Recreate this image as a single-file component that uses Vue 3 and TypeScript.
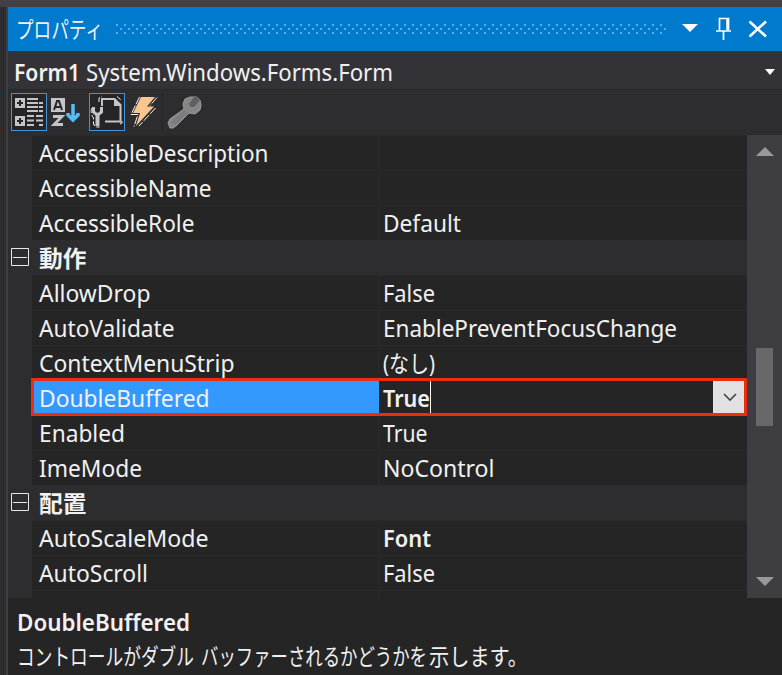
<script setup lang="ts">
import { h, type FunctionalComponent } from 'vue'

interface Row {
  kind: 'row' | 'category'
  name: string
  nameWidth: number
  value?: string
  valueWidth?: number
  bold?: boolean
  selected?: boolean
}

// Single line of text, fitted to the given advance width.
const Label: FunctionalComponent<{ text: string; w: number }> = (props) =>
  h('svg', { width: props.w, height: 34, overflow: 'visible' }, [
    h('text', { x: 0, y: 26, fill: 'currentColor', textLength: props.w, lengthAdjust: 'spacingAndGlyphs' }, props.text),
  ])
Label.props = ['text', 'w']

const rows: Row[] = [
  { kind: 'row', name: 'AccessibleDescription', nameWidth: 229.5 },
  { kind: 'row', name: 'AccessibleName', nameWidth: 172.5 },
  { kind: 'row', name: 'AccessibleRole', nameWidth: 155.5, value: 'Default', valueWidth: 78 },
  { kind: 'category', name: '動作', nameWidth: 47.5 },
  { kind: 'row', name: 'AllowDrop', nameWidth: 111.5, value: 'False', valueWidth: 52 },
  { kind: 'row', name: 'AutoValidate', nameWidth: 135.5, value: 'EnablePreventFocusChange', valueWidth: 294 },
  { kind: 'row', name: 'ContextMenuStrip', nameWidth: 195.5, value: '(なし)', valueWidth: 52 },
  { kind: 'row', name: 'DoubleBuffered', nameWidth: 170.5, value: 'True', valueWidth: 47, bold: true, selected: true },
  { kind: 'row', name: 'Enabled', nameWidth: 86, value: 'True', valueWidth: 44.5 },
  { kind: 'row', name: 'ImeMode', nameWidth: 103, value: 'NoControl', valueWidth: 111.5 },
  { kind: 'category', name: '配置', nameWidth: 47.5 },
  { kind: 'row', name: 'AutoScaleMode', nameWidth: 169.5, value: 'Font', valueWidth: 48, bold: true },
  { kind: 'row', name: 'AutoScroll', nameWidth: 109, value: 'False', valueWidth: 52 },
  { kind: 'row', name: '', nameWidth: 0 },
]
</script>

<template>
  <div class="window">
    <header class="title-bar">
      <Label class="title" text="プロパティ" :w="87" />
      <svg class="grip" width="551" height="12">
        <defs>
          <pattern id="dots" width="8" height="8" patternUnits="userSpaceOnUse">
            <path d="M0 1h2v2H0zM4 5h2v2H4z" fill="#58aee9" />
          </pattern>
        </defs>
        <path d="M0 0h551v12H0z" fill="url(#dots)" />
      </svg>
      <svg class="title-icons" width="92" height="30" fill="none" stroke="#fff">
        <path d="M0 10h16l-8 8z" fill="#fff" stroke="none" />
        <path d="M37.500 16V4.500h9V16M34 17h15M41.500 17v9" stroke-width="1.700" />
        <path d="M45.500 4v12" stroke-width="2.500" />
        <path d="M67.500 7.500l16.500 15M84 7.500l-16.500 15" stroke-width="2.600" />
      </svg>
    </header>

    <div class="object-bar">
      <Label class="bold" text="Form1" :w="66" />
      <Label text="System.Windows.Forms.Form" :w="307" />
      <svg class="object-arrow" width="10" height="6"><path d="M0 0h10L5 6z" fill="#fff" /></svg>
    </div>

    <div class="toolbar">
      <span class="tool active">
        <svg width="34" height="36" fill="none" stroke="#c5c5c5">
          <path d="M3 4h10v10H3zM3 22h10v10H3z" fill="#c5c5c5" stroke="none" />
          <path d="M5 9h6M8 6v6M5 27h6M8 24v6" stroke="#252528" stroke-width="2" />
          <path d="M15 5h11M15 9h11M15 13h11M15 17h11M15 22h7M15 26.500h7M15 31h7M27 9h4M27 13h4M27 17h4M24 22h7M24 26.500h7M27 31h4" stroke-width="2" />
        </svg>
      </span>
      <span class="tool">
        <svg width="34" height="36" fill="none">
          <path d="M3 4h14v14H3z" fill="#c5c5c5" />
          <path d="M6 16l3-9h2l3 9M7 13h6" stroke="#252528" stroke-width="2" />
          <path d="M5 22.500h9L6 30.500h9" stroke="#c5c5c5" stroke-width="2.800" />
          <path d="M25 10v14M20 19v2l5 5 5-5v-2" stroke="#55bdf2" stroke-width="3.500" />
        </svg>
      </span>
      <span class="tool active paged">
        <svg width="34" height="36" fill="none">
          <path d="M12 12V5h12.500l6 6v16.500H15" stroke="#c5c5c5" stroke-width="2" />
          <path d="M24 4v8h7z" fill="#c5c5c5" />
          <path d="M2 14c-2 4 0 8 1.500 10v6l2 3h4M9 8V4l3-2M27 2.500l4.500 4M32 27v2l-2 1" stroke="#f5f5f5" stroke-dasharray="5 2" />
          <path d="M3.500 13v5l4 3 4-3v-5" stroke="#c5c5c5" stroke-width="3" />
          <path d="M7.500 20v12" stroke="#c5c5c5" stroke-width="4" />
        </svg>
      </span>
      <span class="tool bolt">
        <svg width="34" height="36">
          <path d="M14 3h14l-8 9.500h7L9 32l4-13H6z" fill="#fac58e" />
          <path d="M12.500 3L4 20.500h7L7 32.500M30 3.500l-7 8M28.500 14L12 32" fill="none" stroke="#f6f3ee" stroke-dasharray="8 1.500" />
        </svg>
      </span>
      <span class="separator" />
      <span class="tool wrench">
        <svg width="36" height="36">
          <path d="M16 10l2-5 5-2h7l3 3 1 5-1 5-5 4-6-1L9 32l-3 2H3l-2-5 2-4 14-10z" fill="#858585" stroke="#9b9b9b" />
          <path d="M18 17L5 29M20 19L8 30" stroke="#767676" stroke-width="1.500" />
          <path d="M22 10l5-7h3l3 3-6 7h-3z" fill="#5f5f62" />
        </svg>
      </span>
    </div>

    <div class="grid-wrap">
      <div class="grid">
        <div v-for="(row, i) in rows" :key="i" class="entry" :class="[row.kind, { selected: row.selected }]">
          <div class="gutter">
            <svg v-if="row.kind === 'category'" width="18" height="18" fill="none" stroke="#e8e8e8">
              <path d="M.5.500h17v17H.5zM2 9.500h14" />
            </svg>
          </div>
          <div class="name" :class="{ bold: row.kind === 'category' }">
            <Label v-if="row.name" :text="row.name" :w="row.nameWidth" />
          </div>
          <div v-if="row.kind === 'row'" class="value" :class="{ bold: row.bold }">
            <Label v-if="row.value" :text="row.value" :w="row.valueWidth ?? 0" />
            <span v-if="row.selected" class="caret" />
            <span v-if="row.selected" class="drop">
              <svg width="14" height="9" fill="none" stroke="#444" stroke-width="1.600"><path d="M1 1l6 6 6-6" /></svg>
            </span>
          </div>
        </div>
      </div>
      <div class="scrollbar">
        <svg width="18" height="9"><path d="M0 9l9-9 9 9z" fill="#99999b" /></svg>
        <span class="thumb" />
        <svg width="18" height="9"><path d="M0 0h18L9 9z" fill="#99999b" /></svg>
      </div>
    </div>

    <footer class="description">
      <Label class="bold" text="DoubleBuffered" :w="173" />
      <div class="sentence">
        <Label text="コントロールがダブル" :w="177" />
        <Label text="バッファーされるかどうかを" :w="226" />
        <Label text="示します。" :w="99" />
      </div>
    </footer>
  </div>
</template>

<style>
body {
  background: #2d2d30;
}
</style>

<style scoped>
.window {
  box-sizing: border-box;
  width: 782px;
  height: 675px;
  padding-left: 7px;
  border-top: 7px solid #424045;
  overflow: hidden;
  color: #f1f1f1;
  background: linear-gradient(90deg, #2d2d30 6px, #3f3f46 6px, #3f3f46 8px, #2d2d30 8px);
  font: 23px "Noto Sans", "Noto Sans CJK JP", sans-serif;
}
.window > * {
  margin-left: 1px;
}
svg {
  display: block;
  flex: none;
}
.bold {
  font-weight: 600;
}
.title-bar {
  display: flex;
  align-items: center;
  height: 44px;
  padding-left: 8px;
  background: #007acc;
}
.title {
  margin-top: -1px;
  font-family: "Noto Sans CJK JP", sans-serif;
  font-weight: 400;
}
.grip {
  margin-left: 13px;
}
.title-icons {
  margin-left: 15px;
}
.object-bar {
  display: flex;
  align-items: center;
  gap: 6px;
  height: 39px;
  padding: 3px 7px 0 6px;
  box-sizing: border-box;
  background: #333337;
  border-bottom: 1px solid #29292c;
}
.object-arrow {
  margin-left: auto;
}
.toolbar {
  display: flex;
  align-items: center;
  height: 45px;
  padding: 0 0 1px 3px;
  box-sizing: border-box;
}
.tool {
  border: 1px solid transparent;
}
.active {
  border-color: #4594d8;
  background: #252528;
}
.paged {
  margin-left: 6px;
}
.bolt {
  margin-left: 1px;
}
.separator {
  width: 1px;
  height: 36px;
  background: #252528;
}
.wrench {
  margin-left: 3px;
}
.grid-wrap {
  display: flex;
  height: 463px;
}
.grid {
  width: 739px;
  overflow: hidden;
}
.entry {
  display: grid;
  grid-template-columns: 24px 347px 1fr;
  height: 35px;
}
.gutter {
  padding: 8px 0 0 3px;
  background: #2d2d30;
}
.name,
.value {
  display: flex;
  box-sizing: border-box;
  height: 35px;
  background: #252526;
  border-top: 1px solid #2a2a2b;
}
.name {
  padding-left: 7px;
  border-right: 1px solid #2b2b2c;
}
.value {
  padding-left: 4px;
}
.category {
  grid-template-columns: 24px 1fr;
}
.category .name {
  background: #2d2d30;
  border-color: #2d2d30;
}
.selected {
  position: relative;
  z-index: 1;
}
.selected .name {
  background: #3399ff;
  border-color: #3399ff;
}
.selected::after {
  content: "";
  position: absolute;
  inset: -2px 0 -1px 23px;
  border: 3px solid #ed2d10;
}
.caret {
  width: 1px;
  height: 32px;
  background: #fff;
}
.drop {
  display: flex;
  align-items: center;
  justify-content: center;
  width: 34px;
  height: 33px;
  margin-left: auto;
  background: #e1e1e1;
}
.scrollbar {
  display: flex;
  flex-direction: column;
  align-items: center;
  box-sizing: border-box;
  width: 35px;
  padding: 12px 0;
  background: #3e3e42;
}
.thumb {
  width: 17px;
  height: 78px;
  margin: 192px 0 auto;
  background: #686868;
}
.description {
  height: 78px;
  padding: 7px 0 0 9px;
  background: #252526;
}
.sentence {
  display: flex;
  gap: 2px;
  font-family: "Noto Sans CJK JP", sans-serif;
  font-weight: 400;
}
.sentence svg:first-child {
  margin-right: 5px;
}
</style>
